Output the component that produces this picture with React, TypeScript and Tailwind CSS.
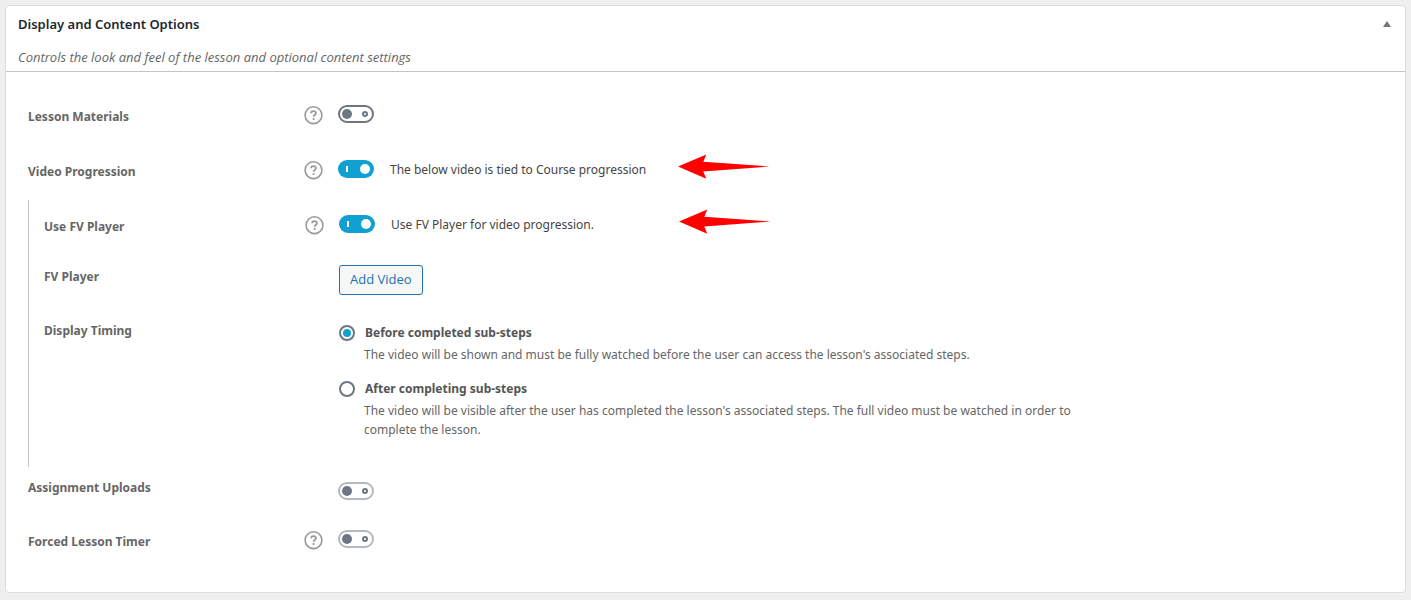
import { useState } from "react";
import type { ReactNode } from "react";

type RowProps = {
  label: string;
  htmlFor?: string;
  help?: boolean;
  nested?: boolean;
  className?: string;
  children: ReactNode;
};

type ToggleProps = {
  id: string;
  defaultChecked?: boolean;
  muted?: boolean;
};

const timings = [
  {
    value: "before",
    title: "Before completed sub-steps",
    description:
      "The video will be shown and must be fully watched before the user can access the lesson's associated steps.",
  },
  {
    value: "after",
    title: "After completing sub-steps",
    description:
      "The video will be visible after the user has completed the lesson's associated steps. The full video must be watched in order to complete the lesson.",
  },
];

const HelpIcon = () => (
  <svg className="size-[19px]" viewBox="0 0 19 19" fill="none" aria-hidden="true">
    <circle cx="9.5" cy="9.2" r="8.4" stroke="#999" strokeWidth="1.6" />
    <path
      d="M7.1 7.3c0-1.3 1-2.1 2.4-2.1s2.4.8 2.4 2c0 1.8-2.3 1.8-2.3 3.6"
      stroke="#999"
      strokeWidth="1.8"
    />
    <circle cx="9.6" cy="13" r="1.1" fill="#999" />
  </svg>
);

const Arrow = () => (
  <svg
    className="absolute -top-1.5 left-full h-[26px] w-[92px]"
    viewBox="0 0 92 26"
    aria-hidden="true"
  >
    <path d="M0 12.5 28.3.5l-3 7.3 66.2 4.7-66.2 5 3 7.3z" fill="#f00" />
  </svg>
);

const Toggle = ({ id, defaultChecked = false, muted = false }: ToggleProps) => {
  const [checked, setChecked] = useState<boolean>(defaultChecked);

  return (
    <label className="relative block shrink-0 cursor-pointer">
      <input
        id={id}
        type="checkbox"
        className="peer sr-only"
        checked={checked}
        onChange={(e) => setChecked(e.target.checked)}
      />
      <svg className="h-[18px] w-9" viewBox="0 0 36 18" aria-hidden="true">
        {checked ? (
          <>
            <rect width="36" height="18" rx="9" fill="#11a0d2" />
            <rect x="8" y="6" width="2" height="6" fill="#fff" />
            <circle cx="27" cy="9" r="5" fill="#fff" />
          </>
        ) : (
          <>
            <rect
              x="1"
              y="1"
              width="34"
              height="16"
              rx="8"
              fill="#fff"
              stroke={muted ? "#b4b9be" : "#6c7781"}
              strokeWidth="2"
            />
            <circle cx="9" cy="9" r="5" fill="#6c7781" />
            <circle cx="27" cy="9" r="2" fill="none" stroke="#6c7781" strokeWidth="2" />
          </>
        )}
      </svg>
    </label>
  );
};

const Row = ({ label, htmlFor, help, nested, className = "", children }: RowProps) => (
  <div className={`flex items-start ${className}`}>
    <label
      htmlFor={htmlFor}
      className={`shrink-0 leading-6 font-bold text-[#666] ${nested ? "w-[261px]" : "w-[276px]"}`}
    >
      {label}
    </label>
    <div className="flex h-5 w-[34px] shrink-0 items-center">{help && <HelpIcon />}</div>
    {children}
  </div>
);

const App: React.FC = (): React.JSX.Element => {
  const [timing, setTiming] = useState<string>("before");

  return (
    <div className="min-h-screen bg-[#efefef] p-[5px] font-['Noto_Sans','Open_Sans',sans-serif] text-xs text-[#444]">
      <section className="rounded-sm border border-[#dcdcde] bg-white pb-[38px]">
        <header className="border-b border-[#c3c4c7] px-3 pt-2">
          <div className="flex items-center justify-between">
            <h2 className="text-[13px] leading-5 font-semibold text-[#23282d]">
              Display and Content Options
            </h2>
            <button type="button" aria-label="Toggle panel" className="p-0.5">
              <svg className="h-1.5 w-2" viewBox="0 0 8 6" aria-hidden="true">
                <path d="M4 0 8 6H0z" fill="#72777c" />
              </svg>
            </button>
          </div>
          <p className="mt-[13px] pb-1 font-['Open_Sans','Noto_Sans',sans-serif] text-[13px] leading-5 text-[#666] italic">
            Controls the look and feel of the lesson and optional content settings
          </p>
        </header>

        <div className="px-[22px] pt-[33px]">
          <Row label="Lesson Materials" htmlFor="materials" help>
            <Toggle id="materials" />
          </Row>
          <Row label="Video Progression" htmlFor="progression" help className="mt-[31px]">
            <Toggle id="progression" defaultChecked />
            <div className="relative ml-4 w-72 leading-5">
              The below video is tied to Course progression
              <Arrow />
            </div>
          </Row>

          <div className="mt-4 border-l border-[#c3c4c7] pt-[15px] pb-7 pl-[15px]">
            <Row label="Use FV Player" htmlFor="fv-player" help nested>
              <Toggle id="fv-player" defaultChecked />
              <div className="relative ml-4 w-72 leading-5">
                Use FV Player for video progression.
                <Arrow />
              </div>
            </Row>
            <Row label="FV Player" htmlFor="add-video" nested className="mt-[26px]">
              <button
                id="add-video"
                type="button"
                className="h-[30px] rounded-[3px] border border-[#2271b1] bg-[#f6f7f7] px-2.5 font-['Open_Sans','Noto_Sans',sans-serif] text-[13px] text-[#2271b1]"
              >
                Add Video
              </button>
            </Row>
            <Row label="Display Timing" htmlFor="timing-before" nested className="mt-6">
              <div className="flex max-w-[752px] flex-col gap-[15px] pt-1">
                {timings.map((item) => (
                  <div key={item.value}>
                    <label className="flex items-center gap-2.5 leading-5 font-bold text-[#555]">
                      <input
                        id={`timing-${item.value}`}
                        type="radio"
                        name="timing"
                        checked={timing === item.value}
                        onChange={() => setTiming(item.value)}
                        className="grid size-4 shrink-0 appearance-none place-items-center rounded-full border-2 border-[#6c7781] bg-white before:size-2 before:rounded-full checked:before:bg-[#11a0d2]"
                      />
                      {item.title}
                    </label>
                    <p className="mt-0.5 pl-[25px] leading-[19px] text-[#666]">{item.description}</p>
                  </div>
                ))}
              </div>
            </Row>
          </div>

          <Row label="Assignment Uploads" htmlFor="uploads" className="mt-[9px]">
            <div className="pt-1.5">
              <Toggle id="uploads" muted />
            </div>
          </Row>
          <Row label="Forced Lesson Timer" htmlFor="timer" help className="mt-[30px]">
            <Toggle id="timer" muted />
          </Row>
        </div>
      </section>
    </div>
  );
};

export default App;
